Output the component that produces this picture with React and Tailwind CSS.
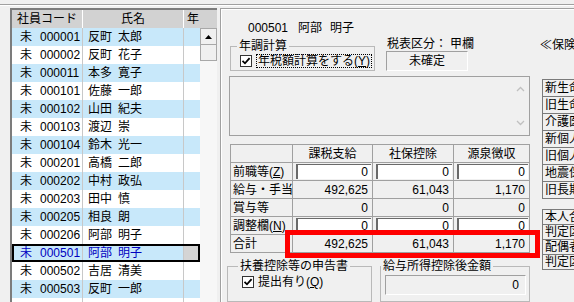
import React from "react";

const rows = [
  ["000001", "反町", "太郎"],
  ["000002", "反町", "花子"],
  ["000011", "本多", "寛子"],
  ["000101", "佐藤", "一郎"],
  ["000102", "山田", "紀夫"],
  ["000103", "渡辺", "崇"],
  ["000104", "鈴木", "光一"],
  ["000201", "高橋", "二郎"],
  ["000202", "中村", "政弘"],
  ["000203", "田中", "慎"],
  ["000205", "相良", "朗"],
  ["000206", "阿部", "明子"],
  ["000501", "阿部", "明子"],
  ["000502", "吉居", "清美"],
  ["000503", "反町", "一郎"],
  ["", "", ""],
];

const tableRows = [
  { label: <>前職等(<span className="underline">Z</span>)</>, vals: ["0", "0", "0"], input: true },
  { label: "給与・手当", vals: ["492,625", "61,043", "1,170"] },
  { label: "賞与等", vals: ["0", "0", "0"] },
  { label: <>調整欄(<span className="underline">N</span>)</>, vals: ["0", "0", "0"], input: true },
  { label: "合計", vals: ["492,625", "61,043", "1,170"] },
];

const colW = ["w-[80px]", "w-[81px]", "w-[76px]"];

function Check() {
  return (
    <span className="w-[12px] h-[12px] border border-[#333333] bg-white flex items-center justify-center shrink-0">
      <svg width="10" height="10" viewBox="0 0 10 10">
        <path d="M1.5 4.8 L4 7.3 L8.6 2.2" fill="none" stroke="black" strokeWidth="1.8" />
      </svg>
    </span>
  );
}

function LeftList() {
  return (
    <div className="w-[207px] shrink-0 border-l-2 border-t-2 border-[#7c7c7c] flex flex-col bg-white overflow-hidden">
      <div className="flex h-[18px] bg-[#d2d2d2] shrink-0">
        <div className="w-[71px] flex items-center justify-center border-r border-white">社員コード</div>
        <div className="w-[101px] flex items-center justify-center border-r border-white">氏名</div>
        <div className="w-[16px] flex items-center pl-[3px] overflow-hidden">年</div>
        <div className="w-[17px]" />
      </div>
      <div className="flex flex-1 min-h-0">
        <div className="w-[188px] flex flex-col overflow-hidden">
          {rows.map((r, i) => {
            const sel = i === 12;
            return (
              <div
                key={i}
                className={`relative flex h-[18px] shrink-0 ${i % 2 === 0 ? "bg-[#c8e8fa]" : "bg-white"} ${sel ? "text-[#0000c0]" : ""}`}
              >
                <div className="w-[71px] flex items-center pl-[8px] border-r border-[#c8c8c8]">
                  {r[0] && <span>未</span>}
                  <span className="ml-[8px]">{r[0]}</span>
                </div>
                <div className="w-[101px] flex items-center pl-[5px] border-r border-[#c8c8c8]">
                  <span>{r[1]}</span>
                  <span className="ml-[6px]">{r[2]}</span>
                </div>
                <div className={`w-[16px] ${sel ? "bg-[#d4d4d4]" : ""}`} />
                {sel && <div className="absolute inset-0 border-2 border-black" />}
              </div>
            );
          })}
        </div>
        <div className="w-[17px] flex flex-col bg-[#f7f7f7]">
          <div className="h-[17px] border border-[#a8a8a8] bg-[#f0f0f0] flex items-center justify-center">
            <svg width="7" height="4" viewBox="0 0 7 4">
              <path d="M0 4 L3.5 0 L7 4Z" fill="black" />
            </svg>
          </div>
          <div className="h-[16px] border border-[#a8a8a8] border-t-0 bg-[#f0f0f0]" />
        </div>
      </div>
    </div>
  );
}

function MainCol() {
  return (
    <div className="w-[313px] shrink-0 flex flex-col">
      <div className="h-[30px] pt-[12px] pl-[26px] leading-[12px] flex">
        <span>000501</span>
        <span className="ml-[10px]">阿部</span>
        <span className="ml-[8px]">明子</span>
      </div>
      <div className="h-[35px] flex shrink-0">
        <fieldset className="ml-[8px] mt-[2px] w-[145px] h-[31px] border border-[#b9b9b9] min-w-0">
          <legend className="ml-[6px] px-[2px] leading-[12px]">年調計算</legend>
          <div className="flex items-center pl-[9px] pt-[2px]">
            <Check />
            <span className="ml-[4px] border border-dotted border-black px-[1px] leading-[12px] whitespace-nowrap">
              年税額計算をする(<span className="underline">Y</span>)
            </span>
          </div>
        </fieldset>
        <div className="ml-[11px] flex flex-col">
          <div className="leading-[12px] h-[13px] pl-[1px] whitespace-nowrap">
            税表区分：<span className="ml-[3px]">甲欄</span>
          </div>
          <div className="h-[20px] w-[82px] border-t border-l border-[#a0a0a0] border-b border-r border-b-white border-r-white flex items-center justify-center">
            未確定
          </div>
        </div>
      </div>
      <div className="ml-[7px] mt-[3px] w-[301px] h-[60px] border border-[#a0a0a0] flex justify-end shrink-0">
        <div className="w-[17px] flex flex-col justify-between items-center py-[9px]">
          <svg width="9" height="6" viewBox="0 0 9 6">
            <path d="M1 5 L4.5 1.5 L8 5" fill="none" stroke="#c0c0c0" strokeWidth="1.3" />
          </svg>
          <svg width="9" height="6" viewBox="0 0 9 6">
            <path d="M1 1 L4.5 4.5 L8 1" fill="none" stroke="#c0c0c0" strokeWidth="1.3" />
          </svg>
        </div>
      </div>
      <div className="ml-[8px] mt-[8px] w-[300px] border-t border-l border-[#a0a0a0] flex flex-col shrink-0">
        <div className="flex h-[18px]">
          <div className="w-[62px] border-r border-b border-[#a0a0a0]" />
          {["課税支給", "社保控除", "源泉徴収"].map((h, j) => (
            <div key={h} className={`${colW[j]} border-r border-b border-[#a0a0a0] flex items-center justify-center`}>
              {h}
            </div>
          ))}
        </div>
        {tableRows.map((r, i) => (
          <div key={i} className="flex h-[18px]">
            <div className="w-[62px] border-r border-b border-[#a0a0a0] flex items-center pl-[2px] whitespace-nowrap">
              {r.label}
            </div>
            {r.vals.map((v, j) => (
              <div key={j} className={`${colW[j]} border-r border-b border-[#a0a0a0] flex`}>
                {r.input ? (
                  <div className="flex-1 ml-[3px] mr-[1px] my-[1px] bg-white border-t border-l border-[#6a6a6a] border-l-2 flex items-center justify-end pr-[3px]">
                    {v}
                  </div>
                ) : (
                  <div className="flex-1 flex items-center justify-end pr-[4px]">{v}</div>
                )}
              </div>
            ))}
          </div>
        ))}
      </div>
      <div className="flex mt-[7px]">
        <fieldset className="ml-[5px] w-[145px] h-[42px] border border-[#b9b9b9] min-w-0">
          <legend className="ml-[10px] px-[2px] leading-[12px]">扶養控除等の申告書</legend>
          <div className="flex items-center pl-[14px] pt-[4px]">
            <Check />
            <span className="ml-[4px] leading-[12px] whitespace-nowrap">
              提出有り(<span className="underline">Q</span>)
            </span>
          </div>
        </fieldset>
        <fieldset className="ml-[8px] w-[150px] h-[42px] border border-[#b9b9b9] min-w-0">
          <legend className="px-[2px] leading-[12px]">給与所得控除後金額</legend>
          <div className="ml-[4px] mt-[3px] w-[141px] h-[20px] border-t border-l border-[#a0a0a0] border-b border-r border-b-white border-r-white flex items-center justify-end pr-[6px]">
            0
          </div>
        </fieldset>
      </div>
    </div>
  );
}

function RightCol() {
  const t1 = ["新生命保険料", "旧生命保険料", "介護医療保険料", "新個人年金", "旧個人年金", "地震保険料", "旧長期損害"];
  const t2 = ["本人合計所得", "判定区分", "配偶者合計所得", "判定区分"];
  return (
    <div className="w-[120px] shrink-0 flex flex-col pl-[5px]">
      <div className="mt-[29px] leading-[12px] whitespace-nowrap">≪保険料控除</div>
      <div className="ml-[2px] mt-[28px] w-[80px] border-l border-t border-[#7a7a7a] flex flex-col">
        {t1.map((t, i) => (
          <div key={i} className="h-[17px] border-b border-r border-[#7a7a7a] pl-[2px] flex items-center whitespace-nowrap overflow-hidden">
            {t}
          </div>
        ))}
      </div>
      <div className="ml-[2px] mt-[10px] w-[80px] border-l border-t border-[#7a7a7a] flex flex-col">
        {t2.map((t, i) => (
          <div key={i} className="h-[15px] border-b border-r border-[#7a7a7a] pl-[2px] flex items-center whitespace-nowrap overflow-hidden">
            {t}
          </div>
        ))}
      </div>
    </div>
  );
}

export default function App() {
  return (
    <div className="relative w-[574px] h-[302px] overflow-hidden bg-[#f0f0f0] text-[12px] text-black leading-none font-['Liberation_Sans','Noto_Sans_CJK_JP',sans-serif] pt-[4px]">
      <div className="h-[2px] border-t border-[#a0a0a0] bg-white" />
      <div className="h-[2px]" />
      <div className="flex h-[294px]">
        <div className="w-[10px] shrink-0" />
        <LeftList />
        <div className="w-[3px] shrink-0" />
        <div className="flex-1 min-w-0 border-l border-t border-[#a0a0a0] overflow-hidden">
          <div className="h-full border-l border-t border-white flex">
            <MainCol />
            <RightCol />
          </div>
        </div>
      </div>
      <div className="absolute left-[285px] top-[230px] w-[255px] h-[28px] border-[5px] border-[#ff0000]" />
    </div>
  );
}
